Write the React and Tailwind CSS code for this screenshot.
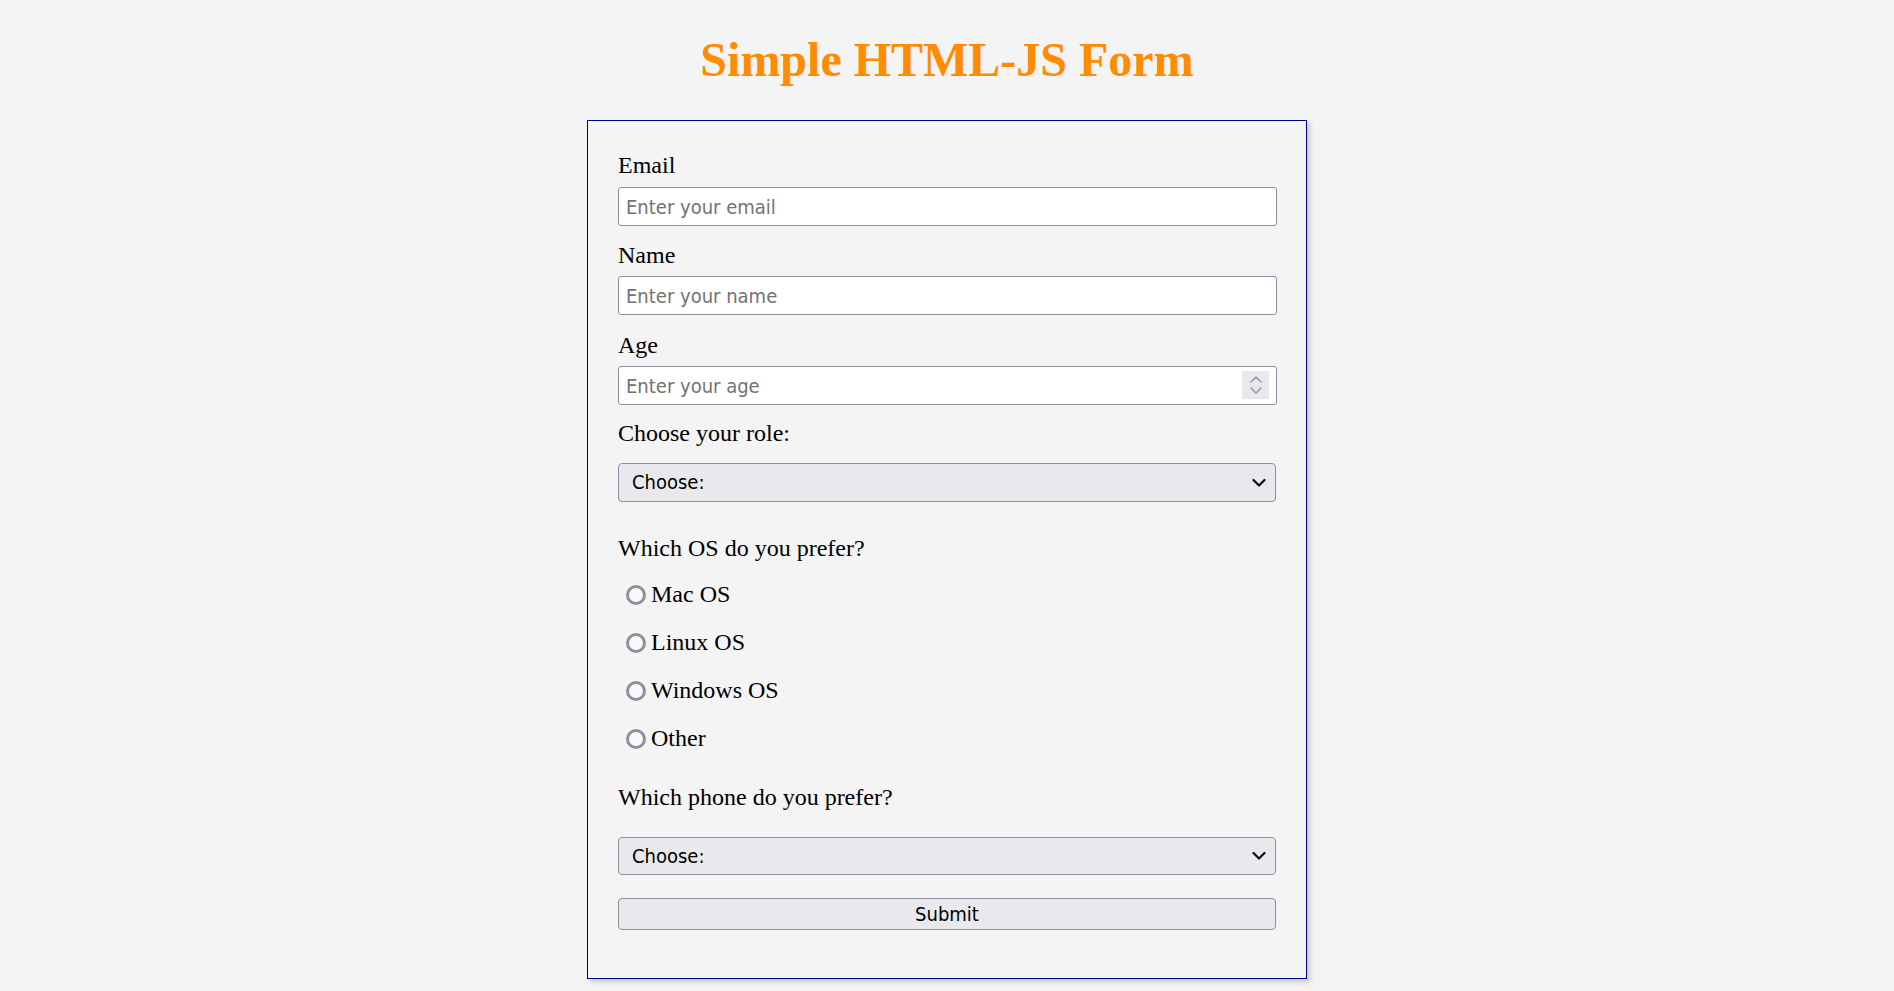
import React from "react";

const ctl = { fontFamily: '"DejaVu Sans Condensed", "DejaVu Sans", Tahoma, sans-serif' };

const Chevron = ({ className }) => (
  <svg className={className} width="14" height="9" viewBox="0 0 14 9" fill="none">
    <path d="M1.5 1.5 L7 7 L12.5 1.5" stroke="#111" strokeWidth="2.2" strokeLinecap="round" strokeLinejoin="round" />
  </svg>
);

const Select = ({ className }) => (
  <div className={"relative " + className}>
    <select
      style={ctl}
      className="appearance-none block w-full h-full bg-[#e9e9ed] border border-[#8f8f9d] rounded-[4px] pl-[13px] text-[20px] text-black outline-none"
      defaultValue=""
    >
      <option value="">Choose:</option>
    </select>
    <Chevron className="absolute right-[10px] top-1/2 -translate-y-1/2 pointer-events-none" />
  </div>
);

const Radio = ({ label, className }) => (
  <label className={"flex items-center h-[27px] " + className}>
    <span className="shrink-0 ml-[8px] mr-[5px] w-[20px] h-[20px] rounded-full border-[3px] border-solid border-[#8f8f9d] bg-[#fafafa]" />
    <span>{label}</span>
  </label>
);

const Input = ({ placeholder, className }) => (
  <input
    style={ctl}
    placeholder={placeholder}
    className={
      "block w-[659px] h-[39px] bg-white border border-[#8f8f9d] rounded-[3px] pl-[7px] text-[20px] placeholder:text-[#737373] outline-none " +
      className
    }
  />
);

export default function App() {
  return (
    <div
      className="min-h-screen bg-[#f4f4f4] flex flex-col items-center pt-[33px] pb-[12px] text-black"
      style={{ fontFamily: '"Liberation Serif", "Times New Roman", serif' }}
    >
      <h1 className="text-[48px] leading-[53px] font-bold text-[#ff8c00]">Simple HTML-JS Form</h1>

      <form className="mt-[34px] w-[720px] border border-[#00008b] shadow-[3px_3px_5px_rgba(0,0,0,0.18)] px-[30px] pt-[31px] pb-[48px] flex flex-col text-[24px] leading-[27px]">
        <div>Email</div>
        <Input placeholder="Enter your email" className="mt-[8px]" />

        <div className="mt-[16px]">Name</div>
        <Input placeholder="Enter your name" className="mt-[7px]" />

        <div className="mt-[17px]">Age</div>
        <div className="relative mt-[7px]">
          <Input placeholder="Enter your age" />
          <span className="absolute right-[7px] top-[5px] w-[27px] h-[28px] bg-[#e9e9ed] flex flex-col items-center justify-center gap-[4px]">
            <svg width="12" height="7" viewBox="0 0 12 7" fill="none">
              <path d="M1 6 L6 1 L11 6" stroke="#9a9aa6" strokeWidth="1.6" strokeLinecap="round" strokeLinejoin="round" />
            </svg>
            <svg width="12" height="7" viewBox="0 0 12 7" fill="none">
              <path d="M1 1 L6 6 L11 1" stroke="#9a9aa6" strokeWidth="1.6" strokeLinecap="round" strokeLinejoin="round" />
            </svg>
          </span>
        </div>

        <div className="mt-[15px]">Choose your role:</div>
        <Select className="mt-[16px] w-[658px] h-[39px]" />

        <div className="mt-[33px]">Which OS do you prefer?</div>
        <Radio label="Mac OS" className="mt-[19px]" />
        <Radio label="Linux OS" className="mt-[21px]" />
        <Radio label="Windows OS" className="mt-[21px]" />
        <Radio label="Other" className="mt-[21px]" />

        <div className="mt-[32px]">Which phone do you prefer?</div>
        <Select className="mt-[26px] w-[658px] h-[38px]" />

        <button
          type="button"
          style={ctl}
          className="mt-[23px] w-[658px] h-[32px] bg-[#e9e9ed] border border-[#8f8f9d] rounded-[4px] text-[20px] text-black"
        >
          Submit
        </button>
      </form>
    </div>
  );
}
